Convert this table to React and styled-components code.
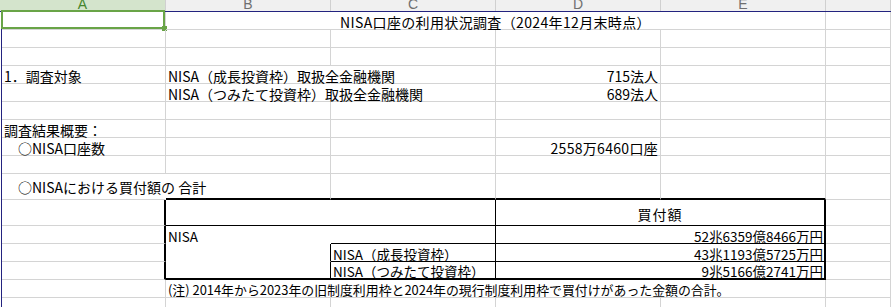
import React from 'react';
import styled, { createGlobalStyle } from 'styled-components';

const GRID = '#d4d4d4';
const NAVY = '#23237f';
const SEL = '#69a447';

const Global = createGlobalStyle`
  html, body { margin: 0; padding: 0; background: #fff; }
  body {
    font-family: "Noto Sans CJK JP", "Noto Sans", sans-serif;
    color: #000;
    overflow: hidden;
  }
`;

const Frame = styled.div`
  width: 891px;
  height: 307px;
  overflow: hidden;
  background: #fff;
`;

const HeaderBar = styled.div`
  display: grid;
  grid-template-columns: 166px 165px 165px 165px 165px 1fr;
  height: 11px;
  border-bottom: 1px solid ${NAVY};
  background: #f0f0f0;
`;

const HeaderCell = styled.div`
  box-sizing: border-box;
  display: flex;
  align-items: flex-end;
  justify-content: center;
  overflow: hidden;
  border-right: 1px solid #d0d0d0;
  background: ${(p) => (p.$active ? '#d4e4cc' : '#f0f0f0')};
  color: ${(p) => (p.$active ? '#45862d' : '#6f6f6f')};
  font-family: "Liberation Sans", Arial, sans-serif;
  font-size: 14px;
  line-height: 14px;
`;

const Sheet = styled.div`
  display: grid;
  grid-template-columns: 164px 165px 165px 165px 165px 1fr;
  grid-template-rows: repeat(9, 18px) 26px 26px repeat(6, 18px);
  margin-left: 1px;
  border-left: 1px solid ${NAVY};
`;

const line = (t) => {
  if (t === 'n') return '1px solid transparent';
  if (t === 'k') return '1px solid #000';
  if (t === 'K') return '2px solid #000';
  return `1px solid ${GRID}`;
};

const Cell = styled.div`
  position: relative;
  box-sizing: border-box;
  min-width: 0;
  grid-column: span ${(p) => p.$span || 1};
  display: flex;
  align-items: ${(p) => (p.$v === 'center' ? 'center' : 'flex-end')};
  justify-content: ${(p) =>
    p.$al === 'right' ? 'flex-end' : p.$al === 'center' ? 'center' : 'flex-start'};
  padding: ${(p) => p.$pt || 0}px ${(p) => (p.$pr ?? 2)}px ${(p) => p.$pb || 0}px 2px;
  border-right: ${(p) => line(p.$r)};
  border-bottom: ${(p) => line(p.$b)};
  white-space: nowrap;
  overflow: visible;
  font-size: ${(p) => p.$sz || 14}px;
  line-height: ${(p) => Math.round(p.$sz || 14)}px;
  letter-spacing: ${(p) => p.$ls || 0}px;
  z-index: ${(p) => (p.$r === 'n' ? 1 : 0)};
`;

const Selection = styled.span`
  position: absolute;
  left: -1px;
  top: -2px;
  right: 0;
  bottom: 0;
  border: 2px solid ${SEL};
  z-index: 3;
  pointer-events: none;
`;

const Handle = styled.span`
  position: absolute;
  right: -4px;
  bottom: -4px;
  width: 5px;
  height: 5px;
  background: ${SEL};
`;

const T = (t, o = {}) => ({ t, ...o });
const blank = () => [{}, {}, {}, {}, {}, {}];

const TS = 13.5;

const rows = [
  [
    { sel: true },
    T('NISA口座の利用状況調査（2024年12月末時点）', { span: 4, al: 'center', ls: 0.35 }),
    {},
  ],
  blank(),
  blank(),
  [
    T('1．調査対象'),
    T('NISA（成長投資枠）取扱全金融機関', { r: 'n' }),
    {},
    T('715法人', { al: 'right' }),
    {},
    {},
  ],
  [
    {},
    T('NISA（つみたて投資枠）取扱全金融機関', { r: 'n' }),
    {},
    T('689法人', { al: 'right' }),
    {},
    {},
  ],
  blank(),
  [T('調査結果概要：'), {}, {}, {}, {}, {}],
  [T('　○NISA口座数'), {}, {}, T('2558万6460口座', { al: 'right', ls: 0.3 }), {}, {}],
  blank(),
  [
    T('　○NISAにおける買付額の 合計', { r: 'n', v: 'center' }),
    { b: 'K' },
    { b: 'K' },
    { b: 'K' },
    { b: 'K' },
    {},
  ],
  [
    { r: 'K' },
    { span: 2, r: 'k', b: 'k' },
    T('買付額', { span: 2, r: 'K', b: 'k', al: 'center', v: 'center', pt: 3, ls: 1 }),
    {},
  ],
  [
    { r: 'K' },
    T('NISA', { r: 'n', b: 'n', sz: TS }),
    { r: 'k', b: 'k' },
    T('52兆6359億8466万円', { span: 2, r: 'K', b: 'k', al: 'right', sz: TS, pr: 1 }),
    {},
  ],
  [
    { r: 'K' },
    { r: 'k', b: 'n' },
    T('NISA（成長投資枠）', { r: 'k', b: 'k', sz: TS }),
    T('43兆1193億5725万円', { span: 2, r: 'K', b: 'k', al: 'right', sz: TS, pr: 1 }),
    {},
  ],
  [
    { r: 'K' },
    { r: 'k', b: 'K' },
    T('NISA（つみたて投資枠）', { r: 'k', b: 'K', sz: TS }),
    T('9兆5166億2741万円', { span: 2, r: 'K', b: 'K', al: 'right', sz: TS, pr: 1 }),
    {},
  ],
  [
    {},
    T(
      '(注) 2014年から2023年の旧制度利用枠と2024年の現行制度利用枠で買付けがあった金額の合計。',
      { span: 4, sz: 12.9, pb: 1 }
    ),
    {},
  ],
  blank(),
  blank(),
];

const letters = ['A', 'B', 'C', 'D', 'E', ''];

export default function App() {
  return (
    <Frame>
      <Global />
      <HeaderBar>
        {letters.map((l, i) => (
          <HeaderCell key={i} $active={i === 0}>
            {l}
          </HeaderCell>
        ))}
      </HeaderBar>
      <Sheet>
        {rows.map((row, ri) =>
          row.map((c, ci) => (
            <Cell
              key={`${ri}-${ci}`}
              $span={c.span}
              $al={c.al}
              $v={c.v}
              $r={c.r}
              $b={c.b}
              $sz={c.sz}
              $ls={c.ls}
              $pt={c.pt}
              $pb={c.pb}
              $pr={c.pr}
            >
              {c.t}
              {c.sel && (
                <Selection>
                  <Handle />
                </Selection>
              )}
            </Cell>
          ))
        )}
      </Sheet>
    </Frame>
  );
}
